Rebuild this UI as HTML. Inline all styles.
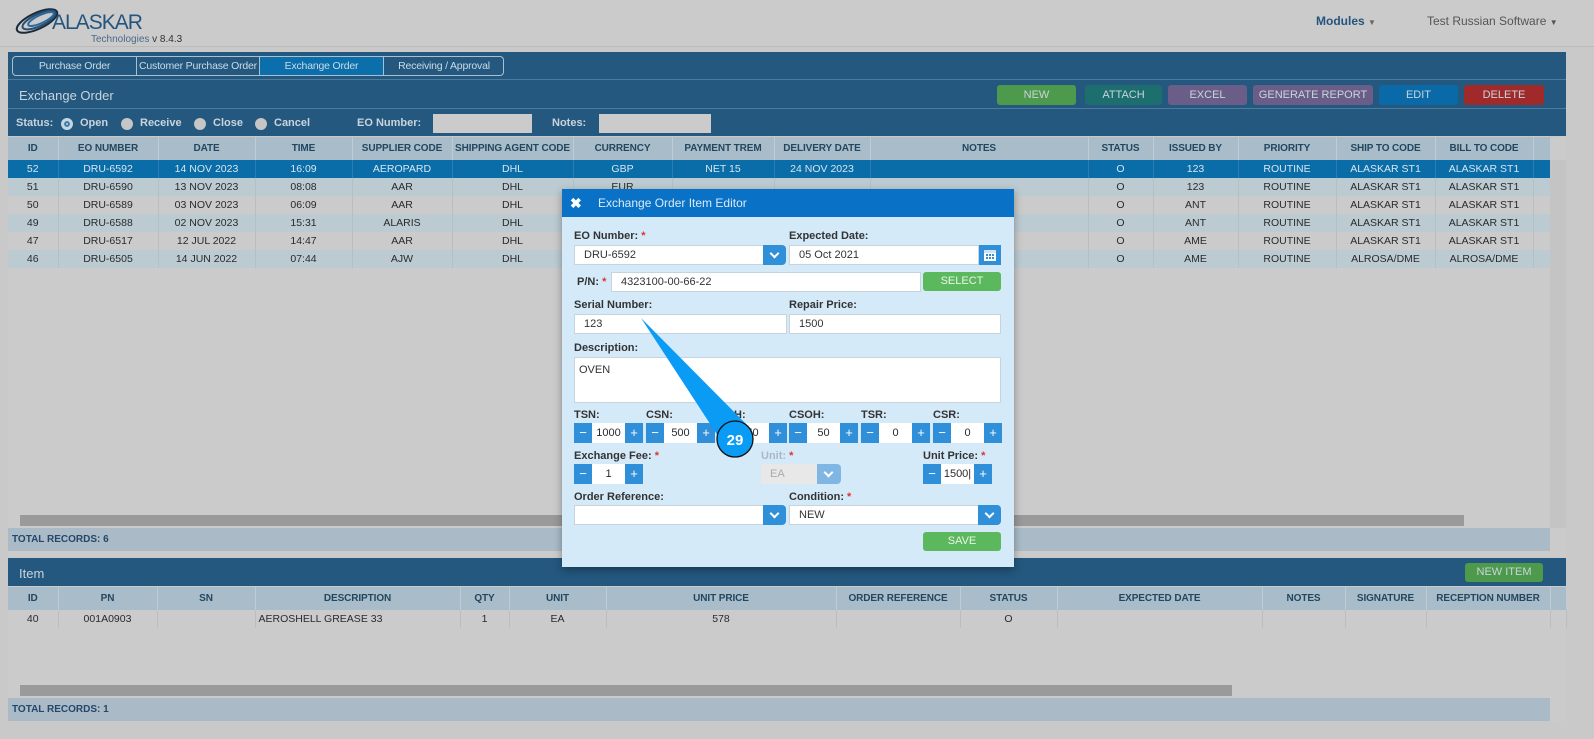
<!DOCTYPE html>
<html><head><meta charset="utf-8"><style>
*{box-sizing:border-box;margin:0;padding:0}
body{width:1594px;height:739px;background:#c9c9c9;font-family:"Liberation Sans",sans-serif;position:relative;overflow:hidden;font-size:11px;color:#2a2a2a}
.a{position:absolute}
table{border-collapse:collapse;table-layout:fixed;position:absolute}
td{text-align:center;height:18px;border-right:1px solid #b8bfc4;white-space:nowrap;overflow:hidden;font-size:10.5px}
th{height:23px;background:#a9bcca;color:#23475f;font-size:10px;border-right:1px solid #c0ccd4;white-space:nowrap;overflow:hidden;letter-spacing:-0.1px}
tr.s td{background:#0a6da8;color:#d7e6f0;border-right-color:#2a7eb4}
tr.g td{background:#cbcbcb}
tr.b td{background:#bccbd2}
.btn{position:absolute;height:20px;top:85px;color:#c9d4dc;font-size:11px;text-align:center;line-height:20px;border-radius:3px}
.lbl{position:absolute;font-size:11px;font-weight:bold;color:#333}
.st{color:#d33}
.inp{position:absolute;background:#fff;border:1px solid #c8d4dc;height:20px;font-size:11px;line-height:18px;padding-left:9px;color:#333}
.dd{position:absolute;width:23px;height:20px;background:#2f8fd8;border-radius:0 4px 4px 0}
.dd::after{content:"";position:absolute;left:8px;top:5px;width:5px;height:5px;border-right:2px solid #fff;border-bottom:2px solid #fff;transform:rotate(45deg)}
.sp{position:absolute;height:20px;width:66px;background:#fff}
.sp .m,.sp .p{position:absolute;top:0;width:18px;height:20px;background:#2f8fd8;color:#fff;text-align:center;line-height:20px;font-size:13px}
.sp .m{left:0}.sp .p{right:0}
.sp .v{position:absolute;left:18px;right:18px;text-align:center;line-height:20px;font-size:11px}
.tab{position:absolute;top:0;text-align:center;font-size:10.5px;letter-spacing:-0.2px}
</style></head><body>
<div class="a" style="left:0;top:0;width:1594px;height:47px;background:#cbcbcb;border-bottom:1px solid #bbb"></div>
<svg class="a" style="left:12px;top:5px" width="50" height="32" viewBox="0 0 50 32">
<g fill="none" stroke-width="2"><ellipse cx="25" cy="16" rx="22" ry="8" transform="rotate(-25 25 16)" stroke="#1a2a3a"/><ellipse cx="27" cy="15" rx="18" ry="6" transform="rotate(-25 27 15)" stroke="#2a5070"/><ellipse cx="29" cy="14" rx="14" ry="4" transform="rotate(-25 29 14)" stroke="#2a6aa0"/></g></svg>
<div class="a" style="left:52px;top:11px;font-size:21px;color:#24557e;letter-spacing:-1px">ALASKAR</div>
<div class="a" style="left:91px;top:34px;font-size:10px;color:#4a6a8a">Technologies <span style="color:#333">v 8.4.3</span></div>
<div class="a" style="left:1316px;top:14px;font-size:12px;font-weight:bold;color:#24557e">Modules <span style="font-size:8px;color:#666">▼</span></div>
<div class="a" style="left:1427px;top:14px;font-size:12px;color:#555">Test Russian Software <span style="font-size:8px">▼</span></div>

<div class="a" style="left:8px;top:52px;width:1558px;height:84px;background:#24587f"></div>
<div class="a" style="left:8px;top:79px;width:1558px;height:1px;background:#4a7ca0"></div>
<div class="a" style="left:8px;top:108px;width:1558px;height:1px;background:#4a7ca0"></div>
<div class="a" style="left:12px;top:56px;width:492px;height:20px;border:1px solid #a9c0d0;border-radius:4px;color:#ccdbe6;line-height:18px;overflow:hidden">
<span class="tab" style="left:0;width:123px">Purchase Order</span>
<span class="tab" style="left:123px;width:123px;border-left:1px solid #a9c0d0">Customer Purchase Order</span>
<span class="tab" style="left:246px;width:124px;background:#0a6fab;border-left:1px solid #a9c0d0">Exchange Order</span>
<span class="tab" style="left:370px;width:121px;border-left:1px solid #a9c0d0">Receiving / Approval</span></div>
<div class="a" style="left:19px;top:88px;font-size:13px;color:#c9d4dc">Exchange Order</div>
<div class="btn" style="left:997px;width:79px;background:#4e9a4c">NEW</div>
<div class="btn" style="left:1085px;width:77px;background:#1d6e6e">ATTACH</div>
<div class="btn" style="left:1168px;width:79px;background:#6a5e88">EXCEL</div>
<div class="btn" style="left:1253px;width:120px;background:#6a5e88">GENERATE REPORT</div>
<div class="btn" style="left:1379px;width:79px;background:#0a6aa8">EDIT</div>
<div class="btn" style="left:1464px;width:80px;background:#a02a2a">DELETE</div>
<div class="a" style="left:16px;top:117px;font-size:11px;font-weight:bold;color:#c9d4dc">Status:</div>
<div class="a" style="left:61px;top:118px;width:12px;height:12px;border-radius:50%;background:#ccc;border:3px solid #c6d6e0;box-shadow:inset 0 0 0 2px #3a7bb0"></div>
<div class="a" style="left:80px;top:117px;color:#c9d4dc;font-weight:bold">Open</div>
<div class="a" style="left:121px;top:118px;width:12px;height:12px;border-radius:50%;background:#c6c6c6"></div>
<div class="a" style="left:140px;top:117px;color:#c9d4dc;font-weight:bold">Receive</div>
<div class="a" style="left:194px;top:118px;width:12px;height:12px;border-radius:50%;background:#c6c6c6"></div>
<div class="a" style="left:213px;top:117px;color:#c9d4dc;font-weight:bold">Close</div>
<div class="a" style="left:255px;top:118px;width:12px;height:12px;border-radius:50%;background:#c6c6c6"></div>
<div class="a" style="left:274px;top:117px;color:#c9d4dc;font-weight:bold">Cancel</div>
<div class="a" style="left:357px;top:117px;color:#c9d4dc;font-weight:bold">EO Number:</div>
<div class="a" style="left:433px;top:114px;width:99px;height:19px;background:#cbcbcb"></div>
<div class="a" style="left:552px;top:117px;color:#c9d4dc;font-weight:bold">Notes:</div>
<div class="a" style="left:599px;top:114px;width:112px;height:19px;background:#cbcbcb"></div>

<div class="a" style="left:8px;top:137px;width:1558px;height:420px;background:#cbcbcb"></div>
<table style="left:8px;top:137px;width:1542px">
<colgroup><col style="width:50px"><col style="width:100px"><col style="width:97px"><col style="width:97px"><col style="width:100px"><col style="width:121px"><col style="width:99px"><col style="width:102px"><col style="width:96px"><col style="width:218px"><col style="width:65px"><col style="width:85px"><col style="width:98px"><col style="width:99px"><col style="width:98px"><col style="width:17px"></colgroup>
<tr><th>ID</th><th>EO NUMBER</th><th>DATE</th><th>TIME</th><th>SUPPLIER CODE</th><th>SHIPPING AGENT CODE</th><th>CURRENCY</th><th>PAYMENT TREM</th><th>DELIVERY DATE</th><th>NOTES</th><th>STATUS</th><th>ISSUED BY</th><th>PRIORITY</th><th>SHIP TO CODE</th><th>BILL TO CODE</th><th></th></tr>
<tr class="s"><td>52</td><td>DRU-6592</td><td>14 NOV 2023</td><td>16:09</td><td>AEROPARD</td><td>DHL</td><td>GBP</td><td>NET 15</td><td>24 NOV 2023</td><td></td><td>O</td><td>123</td><td>ROUTINE</td><td>ALASKAR ST1</td><td>ALASKAR ST1</td><td></td></tr>
<tr class="b"><td>51</td><td>DRU-6590</td><td>13 NOV 2023</td><td>08:08</td><td>AAR</td><td>DHL</td><td>EUR</td><td></td><td></td><td></td><td>O</td><td>123</td><td>ROUTINE</td><td>ALASKAR ST1</td><td>ALASKAR ST1</td><td></td></tr>
<tr class="g"><td>50</td><td>DRU-6589</td><td>03 NOV 2023</td><td>06:09</td><td>AAR</td><td>DHL</td><td></td><td></td><td></td><td></td><td>O</td><td>ANT</td><td>ROUTINE</td><td>ALASKAR ST1</td><td>ALASKAR ST1</td><td></td></tr>
<tr class="b"><td>49</td><td>DRU-6588</td><td>02 NOV 2023</td><td>15:31</td><td>ALARIS</td><td>DHL</td><td></td><td></td><td></td><td></td><td>O</td><td>ANT</td><td>ROUTINE</td><td>ALASKAR ST1</td><td>ALASKAR ST1</td><td></td></tr>
<tr class="g"><td>47</td><td>DRU-6517</td><td>12 JUL 2022</td><td>14:47</td><td>AAR</td><td>DHL</td><td></td><td></td><td></td><td></td><td>O</td><td>AME</td><td>ROUTINE</td><td>ALASKAR ST1</td><td>ALASKAR ST1</td><td></td></tr>
<tr class="b"><td>46</td><td>DRU-6505</td><td>14 JUN 2022</td><td>07:44</td><td>AJW</td><td>DHL</td><td></td><td></td><td></td><td></td><td>O</td><td>AME</td><td>ROUTINE</td><td>ALROSA/DME</td><td>ALROSA/DME</td><td></td></tr>
</table>
<div class="a" style="left:1550px;top:160px;width:16px;height:368px;background:#c4c4c4"></div>
<div class="a" style="left:20px;top:515px;width:1444px;height:11px;background:#9a9a9a"></div>
<div class="a" style="left:8px;top:528px;width:1542px;height:23px;background:#aabbc7;font-weight:bold;font-size:10px;line-height:23px;padding-left:4px;color:#24476a">TOTAL RECORDS: 6</div>

<div class="a" style="left:8px;top:558px;width:1558px;height:28px;background:#24587f"></div>
<div class="a" style="left:19px;top:566px;font-size:13px;color:#c9d4dc">Item</div>
<div class="a" style="left:1465px;top:563px;width:78px;height:19px;background:#4e9a4c;color:#c9d4dc;font-size:11px;text-align:center;line-height:19px;border-radius:3px">NEW ITEM</div>
<div class="a" style="left:8px;top:586px;width:1558px;height:135px;background:#cbcbcb"></div>
<table style="left:8px;top:587px;width:1558px">
<colgroup><col style="width:50px"><col style="width:99px"><col style="width:98px"><col style="width:205px"><col style="width:49px"><col style="width:97px"><col style="width:230px"><col style="width:124px"><col style="width:97px"><col style="width:205px"><col style="width:83px"><col style="width:81px"><col style="width:124px"><col style="width:16px"></colgroup>
<tr><th>ID</th><th>PN</th><th>SN</th><th>DESCRIPTION</th><th>QTY</th><th>UNIT</th><th>UNIT PRICE</th><th>ORDER REFERENCE</th><th>STATUS</th><th>EXPECTED DATE</th><th>NOTES</th><th>SIGNATURE</th><th>RECEPTION NUMBER</th><th></th></tr>
<tr class="g"><td>40</td><td>001A0903</td><td></td><td style="text-align:left;padding-left:3px">AEROSHELL GREASE 33</td><td>1</td><td>EA</td><td>578</td><td></td><td>O</td><td></td><td></td><td></td><td></td><td></td></tr>
</table>
<div class="a" style="left:20px;top:685px;width:1212px;height:11px;background:#9a9a9a"></div>
<div class="a" style="left:8px;top:698px;width:1542px;height:23px;background:#aabbc7;font-weight:bold;font-size:10px;line-height:23px;padding-left:4px;color:#24476a">TOTAL RECORDS: 1</div>

<div class="a" style="left:562px;top:189px;width:452px;height:378px;background:#d5eaf9;box-shadow:0 3px 8px rgba(0,0,0,.35)"></div>
<div class="a" style="left:562px;top:189px;width:452px;height:28px;background:#0a72c6;color:#dbeaf7;font-size:12px;line-height:28px"><span style="position:absolute;left:8px;font-weight:bold;font-size:14px;color:#fff">✖</span><span style="position:absolute;left:36px">Exchange Order Item Editor</span></div>
<div class="lbl" style="left:574px;top:230px">EO Number: <span class="st">*</span></div>
<div class="inp" style="left:574px;top:245px;width:192px">DRU-6592</div><div class="dd" style="left:763px;top:245px"></div>
<div class="lbl" style="left:789px;top:230px">Expected Date:</div>
<div class="inp" style="left:789px;top:245px;width:190px">05 Oct 2021</div>
<div class="a" style="left:979px;top:245px;width:22px;height:20px;background:#2f8fd8"></div>
<svg class="a" style="left:983px;top:248px" width="14" height="14" viewBox="0 0 14 14"><rect x="1" y="2" width="12" height="11" fill="#fff"/><rect x="1" y="2" width="12" height="3" fill="#cfe3f5"/><g fill="#2f8fd8"><rect x="3" y="6" width="2" height="2"/><rect x="6" y="6" width="2" height="2"/><rect x="9" y="6" width="2" height="2"/><rect x="3" y="9" width="2" height="2"/><rect x="6" y="9" width="2" height="2"/><rect x="9" y="9" width="2" height="2"/></g></svg>
<div class="lbl" style="left:577px;top:276px">P/N: <span class="st">*</span></div>
<div class="inp" style="left:611px;top:272px;width:310px">4323100-00-66-22</div>
<div class="a" style="left:923px;top:272px;width:78px;height:19px;background:#5cb85c;color:#e9f5e9;text-align:center;line-height:19px;border-radius:3px">SELECT</div>
<div class="lbl" style="left:574px;top:299px">Serial Number:</div>
<div class="inp" style="left:574px;top:314px;width:213px">123</div>
<div class="lbl" style="left:789px;top:299px">Repair Price:</div>
<div class="inp" style="left:789px;top:314px;width:212px">1500</div>
<div class="lbl" style="left:574px;top:342px">Description:</div>
<div class="inp" style="left:574px;top:357px;width:427px;height:46px;padding-left:4px;padding-top:3px">OVEN</div>
<div class="lbl" style="left:574px;top:409px">TSN:</div><div class="lbl" style="left:646px;top:409px">CSN:</div><div class="lbl" style="left:734px;top:409px">H:</div><div class="lbl" style="left:789px;top:409px">CSOH:</div><div class="lbl" style="left:861px;top:409px">TSR:</div><div class="lbl" style="left:933px;top:409px">CSR:</div>
<div class="sp" style="left:574px;top:423px;width:69px"><span class="m">−</span><span class="v">1000</span><span class="p">+</span></div>
<div class="sp" style="left:646px;top:423px;width:69px"><span class="m">−</span><span class="v">500</span><span class="p">+</span></div>
<div class="sp" style="left:718px;top:423px;width:69px"><span class="m">−</span><span class="v">50</span><span class="p">+</span></div>
<div class="sp" style="left:789px;top:423px;width:69px"><span class="m">−</span><span class="v">50</span><span class="p">+</span></div>
<div class="sp" style="left:861px;top:423px;width:69px"><span class="m">−</span><span class="v">0</span><span class="p">+</span></div>
<div class="sp" style="left:933px;top:423px;width:69px"><span class="m">−</span><span class="v">0</span><span class="p">+</span></div>
<div class="lbl" style="left:574px;top:450px">Exchange Fee: <span class="st">*</span></div>
<div class="sp" style="left:574px;top:464px;width:69px"><span class="m">−</span><span class="v">1</span><span class="p">+</span></div>
<div class="lbl" style="left:761px;top:450px;color:#a9b8c4">Unit: <span class="st">*</span></div>
<div class="a" style="left:761px;top:464px;width:80px;height:20px;background:#e8e8e8;border-radius:3px;color:#aaa;line-height:20px;padding-left:9px">EA</div>
<div class="dd" style="left:817px;top:464px;width:24px;background:#7fb6e4"></div>
<div class="lbl" style="left:923px;top:450px">Unit Price: <span class="st">*</span></div>
<div class="sp" style="left:923px;top:464px;width:69px"><span class="m">−</span><span class="v">1500|</span><span class="p">+</span></div>
<div class="lbl" style="left:574px;top:491px">Order Reference:</div>
<div class="inp" style="left:574px;top:505px;width:192px"></div><div class="dd" style="left:763px;top:505px"></div>
<div class="lbl" style="left:789px;top:491px">Condition: <span class="st">*</span></div>
<div class="inp" style="left:789px;top:505px;width:190px">NEW</div><div class="dd" style="left:978px;top:505px"></div>
<div class="a" style="left:923px;top:532px;width:78px;height:19px;background:#5cb85c;color:#e9f5e9;text-align:center;line-height:19px;border-radius:3px">SAVE</div>

<svg class="a" style="left:0;top:0" width="1594" height="739">
<polygon points="641,318 718,436 752,430" fill="#0a9bf5"/>
<circle cx="735" cy="439" r="18" fill="#0a9bf5" stroke="#111" stroke-width="1.3"/>
<text x="735" y="445" text-anchor="middle" font-family="Liberation Sans" font-weight="bold" font-size="15" fill="#fff">29</text>
</svg>
</body></html>
